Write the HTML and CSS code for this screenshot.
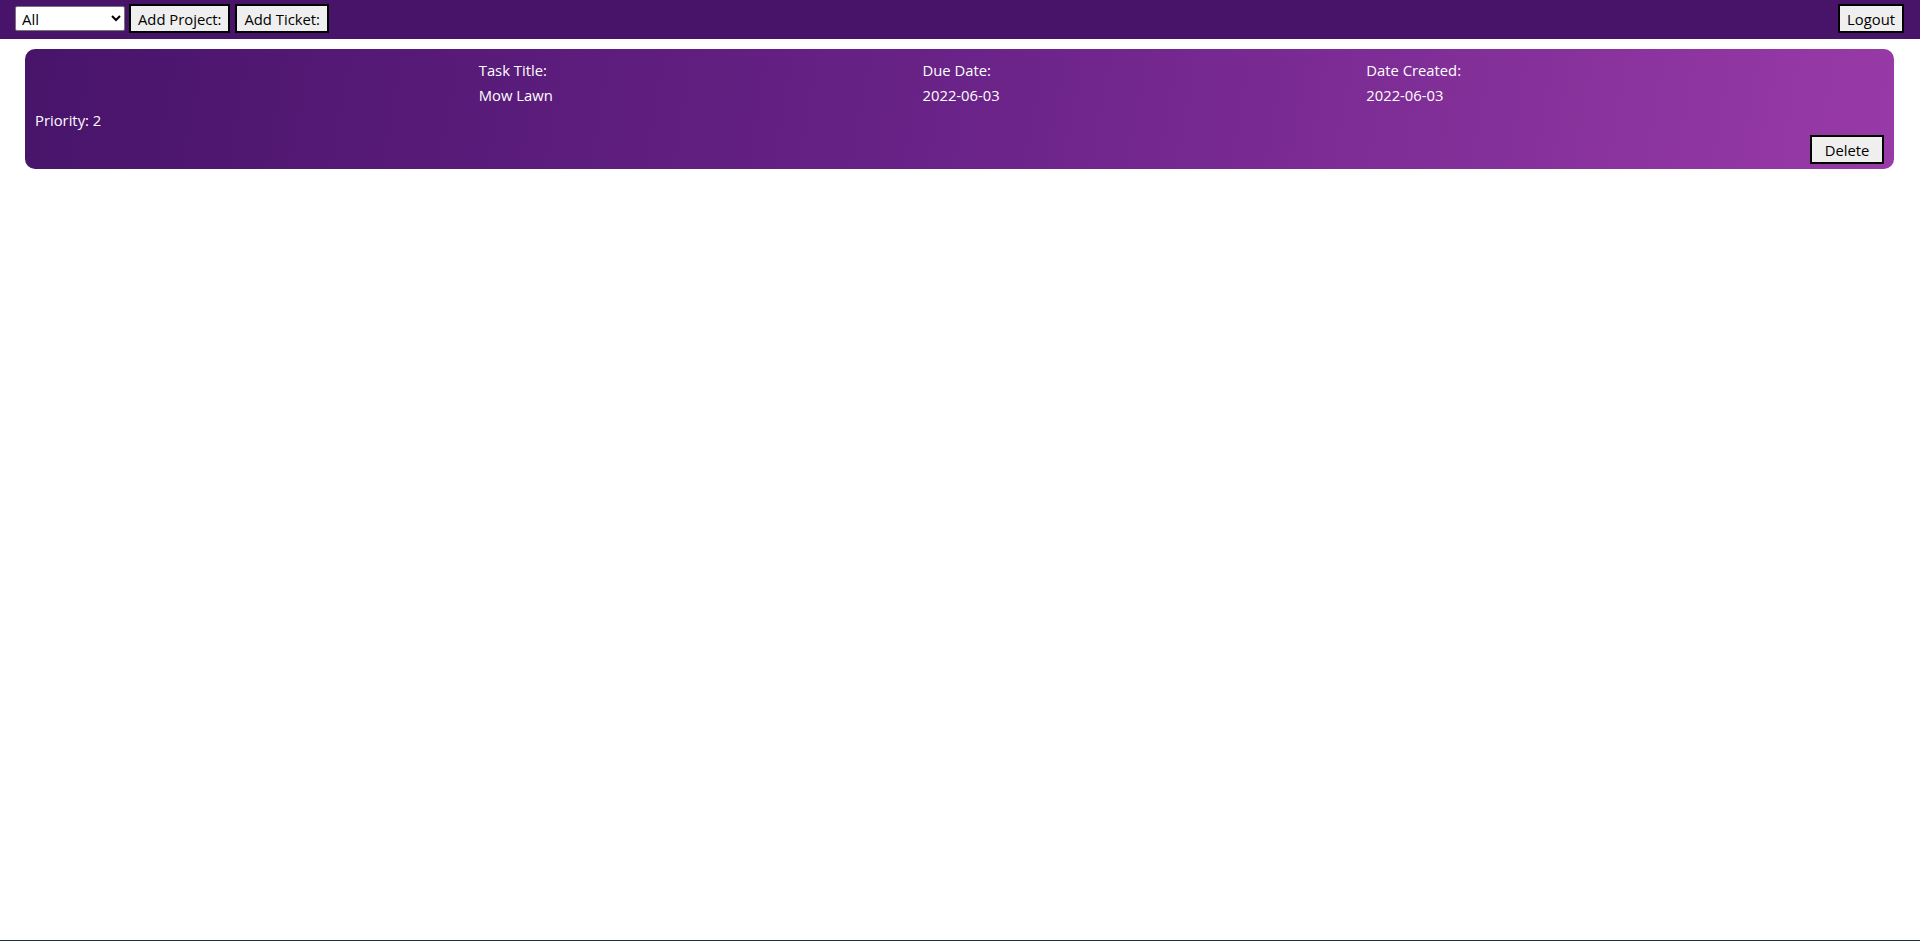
FILE: index.html
```html
<!DOCTYPE html>
<html lang="en">
<head>
<meta charset="utf-8">
<title>Tickets</title>
<link rel="stylesheet" href="styles.css">
</head>
<body>
<nav class="navbar">
  <div class="nav-left">
    <select class="project-select">
      <option>All</option>
    </select>
    <button class="btn">Add Project:</button>
    <button class="btn">Add Ticket:</button>
  </div>
  <button class="btn">Logout</button>
</nav>
<main class="tickets">
  <div class="ticket">
    <div class="col col-first">
      <div class="line"></div>
      <div class="line"></div>
      <div class="line">Priority: 2</div>
    </div>
    <div class="col">
      <div class="line">Task Title:</div>
      <div class="line">Mow Lawn</div>
    </div>
    <div class="col">
      <div class="line">Due Date:</div>
      <div class="line">2022-06-03</div>
    </div>
    <div class="col">
      <div class="line">Date Created:</div>
      <div class="line">2022-06-03</div>
    </div>
    <button class="btn btn-delete">Delete</button>
  </div>
</main>
<div class="bottom-edge"></div>
</body>
</html>
```
FILE: styles.css
```css
html, body {
  margin: 0;
  padding: 0;
  background: #ffffff;
  font-family: "Open Sans", "Noto Sans", sans-serif;
}

.navbar {
  box-sizing: border-box;
  height: 39px;
  background: #48146a;
  display: flex;
  justify-content: space-between;
  align-items: center;
  padding: 0 16px 2px 15px;
}

.nav-left {
  display: flex;
  align-items: center;
  gap: 4px;
}

.project-select {
  box-sizing: border-box;
  width: 110px;
  height: 25px;
  font-family: "Open Sans", sans-serif;
  font-size: 15px;
  border: 1px solid #767676;
  border-radius: 2px;
  background: #ffffff;
  color: #000;
  padding: 0 2px;
}

.btn {
  box-sizing: border-box;
  height: 29px;
  font-family: "Open Sans", sans-serif;
  font-size: 14.8px;
  color: #000;
  background: #efefef;
  border: 2px solid #000;
  border-radius: 0;
  padding: 0 7px;
  cursor: pointer;
}

.nav-left .btn + .btn {
  margin-left: 1px;
}

.tickets {
  padding: 10px 26px 0 25px;
}

.ticket {
  box-sizing: border-box;
  height: 120px;
  border-radius: 10px;
  background: linear-gradient(100deg, #48146a 0%, #6a2388 50%, #983aa7 100%);
  color: #ffffff;
  display: flex;
  padding: 9px 10px 5px 10px;
  font-size: 14.8px;
}

.col {
  flex: 1;
}

.line {
  height: 25px;
  line-height: 25px;
  white-space: nowrap;
}

.btn-delete {
  align-self: flex-end;
  width: 74px;
  padding: 0;
}

.bottom-edge {
  position: fixed;
  left: 0;
  right: 0;
  bottom: 0;
  height: 1px;
  background: #1f3138;
}
```
